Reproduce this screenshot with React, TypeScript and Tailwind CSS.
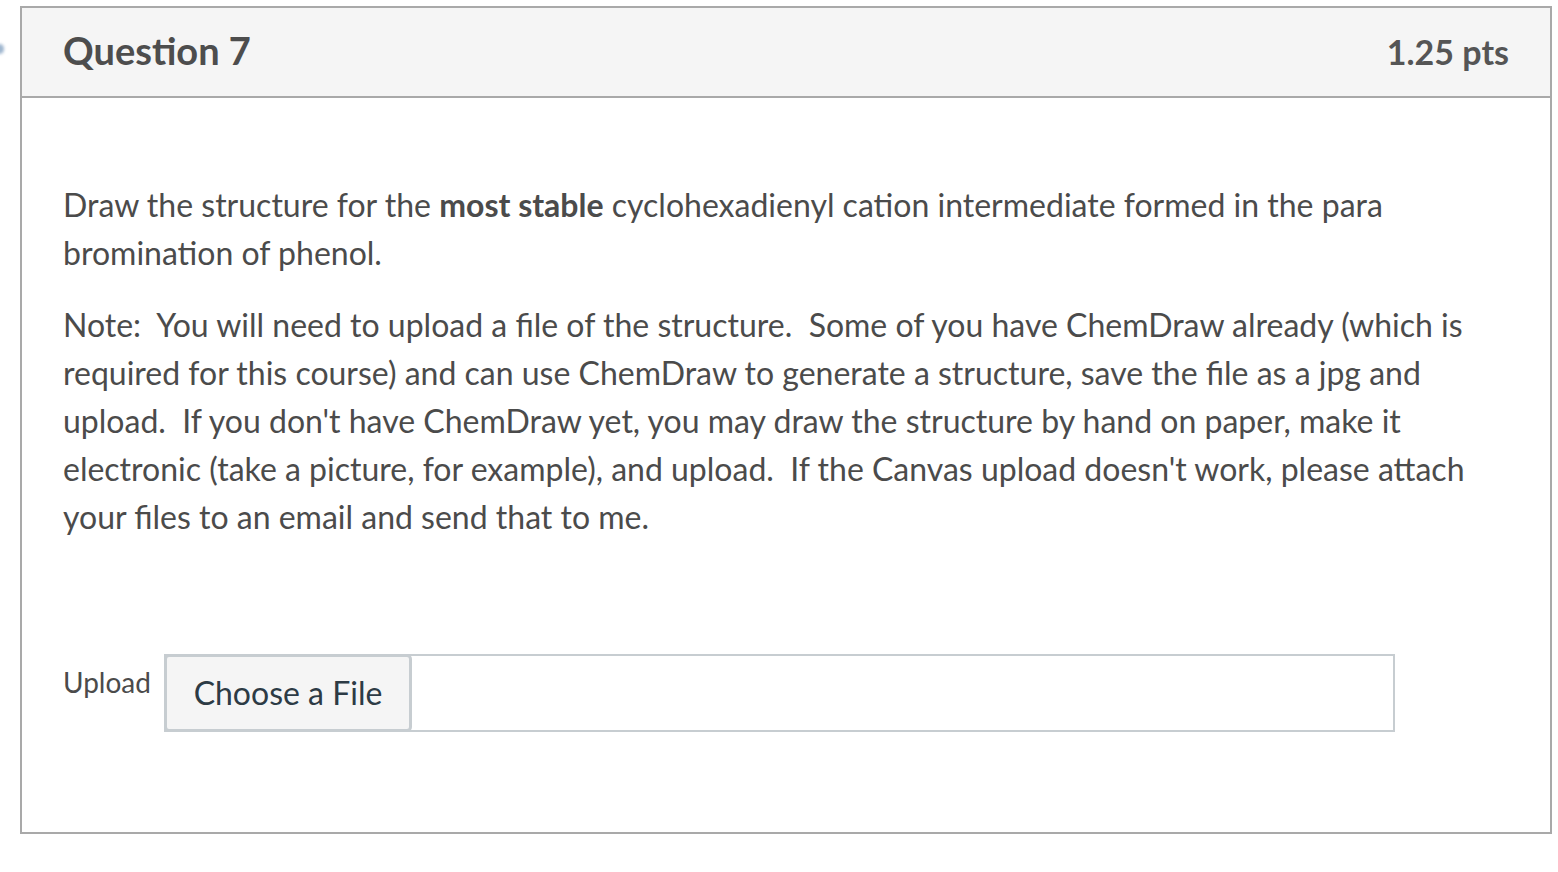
import React from "react";

export default function App() {
  return (
    <div className="relative w-[1558px] h-[872px] bg-white font-['Lato','Liberation_Sans',sans-serif] text-[#4b4b4b]">
      <div className="absolute left-[-5px] top-[44px] w-[9px] h-[10px] rounded-full bg-[#9fb6cf] blur-[1.5px]" />
      <div className="pt-[6px] pl-[20px]">
        <div className="w-[1532px] h-[828px] border-2 border-[#a9a9a9] flex flex-col">
          <div className="h-[90px] bg-[#f5f5f5] border-b-2 border-[#a9a9a9] flex items-center justify-between pl-[41px] pr-[41px]">
            <h2 className="text-[38px] font-bold text-[#4d4d4d] leading-none -mt-[4px]">Question 7</h2>
            <div className="text-[34px] font-bold text-[#555555] leading-none">1.25 pts</div>
          </div>
          <div className="px-[41px] pt-[83px]">
            <p className="text-[32px] leading-[48px]">
              Draw the structure for the <strong className="font-bold">most stable</strong> cyclohexadienyl cation intermediate formed in the para bromination of phenol.
            </p>
            <p className="text-[32px] leading-[48px] mt-[24px]">
              Note:{"\u00a0"} You will need to upload a file of the structure.{"\u00a0"} Some of you have ChemDraw already (which is required for this course) and can use ChemDraw to generate a structure, save the file as a jpg and upload.{"\u00a0"} If you don't have ChemDraw yet, you may draw the structure by hand on paper, make it electronic (take a picture, for example), and upload.{"\u00a0"} If the Canvas upload doesn't work, please attach your files to an email and send that to me.
            </p>
            <div className="flex items-start mt-[113px]">
              <label className="text-[28px] leading-[58px] w-[101px] -mt-[1px]">Upload</label>
              <div className="w-[1231px] h-[78px] border-2 border-[#c7cdd1] flex">
                <button className="w-[248px] h-[78px] -mt-[2px] -ml-[2px] border-[3px] border-[#c7cdd1] rounded-[5px] bg-[#f5f5f5] text-[32px] text-[#2d3b45] flex items-center justify-center">
                  Choose a File
                </button>
              </div>
            </div>
          </div>
        </div>
      </div>
    </div>
  );
}
